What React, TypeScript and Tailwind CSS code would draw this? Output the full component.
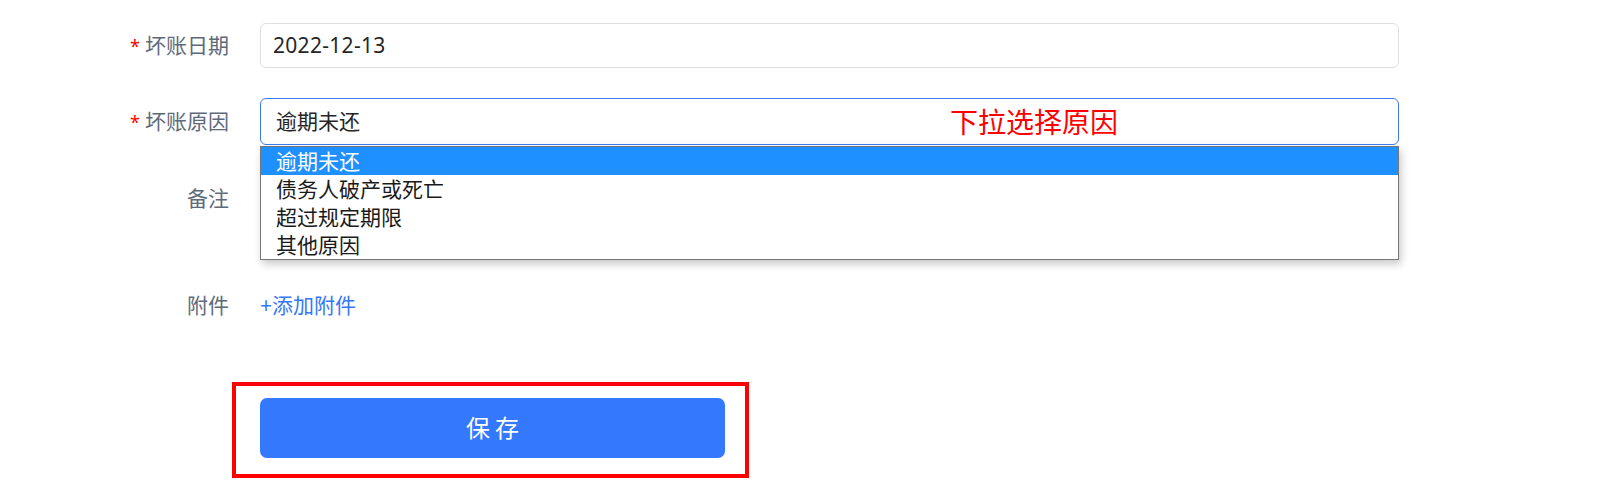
import { useState } from 'react';

const font = { fontFamily: '"Noto Sans", "Noto Sans CJK SC", sans-serif' };

const reasons = ['逾期未还', '债务人破产或死亡', '超过规定期限', '其他原因'];

function Label({ text, required }: { text: string; required?: boolean }) {
  return (
    <div className="w-[229px] shrink-0 text-right text-[21px] leading-[32px] text-[#5e6a7b]">
      {required && <span className="mr-[5px] text-[18px] text-[#f00]">*</span>}
      {text}
    </div>
  );
}

export default function App() {
  const [reason, setReason] = useState(reasons[0]);

  return (
    <div className="min-h-[491px] w-full bg-white pt-[23px]" style={font}>
      {/* 坏账日期 */}
      <div className="flex items-center">
        <Label text="坏账日期" required />
        <div className="ml-[31px] flex h-[45px] w-[1139px] items-center rounded-[6px] border border-[#dcdfe6] pl-[12px] text-[21px] tracking-[0.3px] text-[#262626]">
          2022-12-13
        </div>
      </div>

      {/* 坏账原因 */}
      <div className="relative z-10 mt-[30px] flex items-center">
        <Label text="坏账原因" required />
        <div className="relative ml-[31px] w-[1139px]">
          <div className="flex h-[47px] items-center rounded-[6px] border border-[#3b7bf2] pl-[15px] text-[21px] text-[#262626]">
            {reason}
          </div>
          <span className="absolute left-[690px] top-[4px] text-[28px] leading-[40px] text-[#f00]">
            下拉选择原因
          </span>
          <ul className="absolute left-0 top-[48px] w-full border border-[#767676] bg-white shadow-[2px_4px_8px_rgba(0,0,0,0.22)]">
            {reasons.map((r, i) => (
              <li
                key={r}
                onClick={() => setReason(r)}
                className={`h-[28px] pl-[15px] text-[21px] leading-[28px] ${
                  i === 0 ? 'bg-[#1e90ff] text-white' : 'text-[#1a1a1a]'
                }`}
              >
                {r}
              </li>
            ))}
          </ul>
        </div>
      </div>

      {/* 备注 */}
      <div className="mt-[28px] flex items-start">
        <div className="pt-[9px]">
          <Label text="备注" />
        </div>
        <div className="ml-[31px] h-[82px] w-[1139px] rounded-[6px] border border-[#dcdfe6]" />
      </div>

      {/* 附件 */}
      <div className="mt-[30px] flex h-[40px] items-center">
        <Label text="附件" />
        <button className="ml-[31px] text-[21px] leading-[32px] text-[#3478f6]">+添加附件</button>
      </div>

      {/* 保存 */}
      <div className="ml-[232px] mt-[57px] w-fit border-[4px] border-[#f00] pb-[16px] pl-[24px] pr-[20px] pt-[12px]">
        <button className="flex h-[60px] w-[465px] items-center justify-center rounded-[7px] bg-[#3478fe] pl-[5px] text-[24px] tracking-[5px] text-white">
          保存
        </button>
      </div>
    </div>
  );
}
